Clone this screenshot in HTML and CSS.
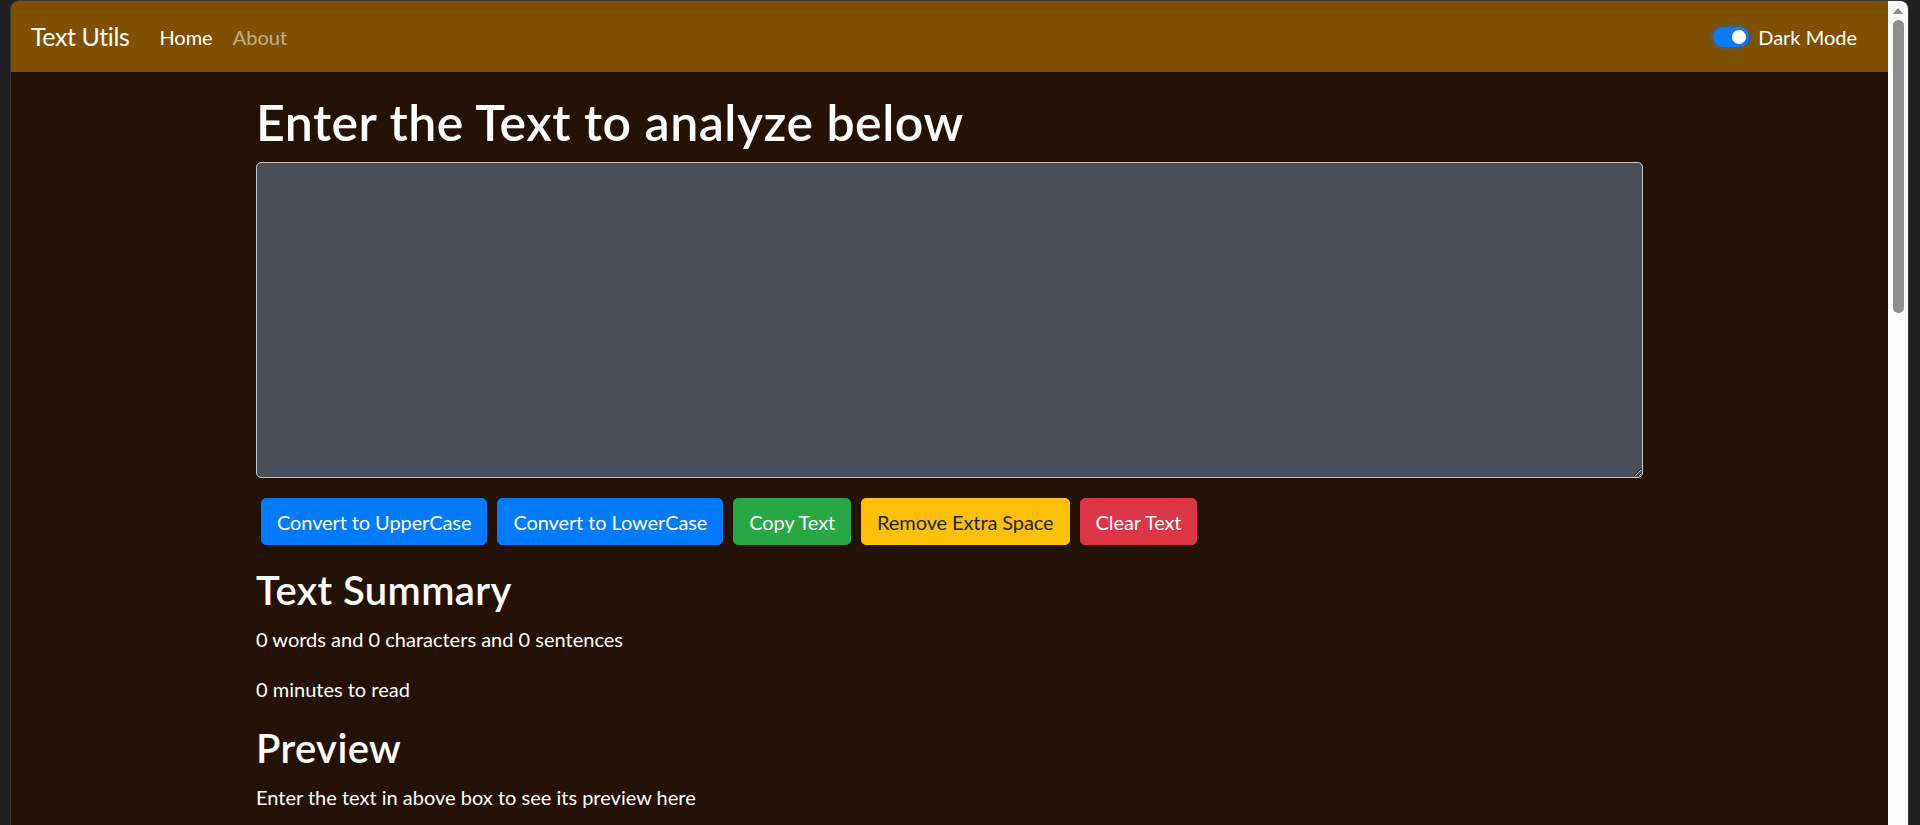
FILE: index.html
```html
<!DOCTYPE html>
<html lang="en">
<head>
<meta charset="utf-8">
<title>Text Utils</title>
<link rel="stylesheet" href="styles.css">
</head>
<body>
<div class="window">
  <div class="page">
    <nav class="navbar">
      <a class="brand" href="#">Text Utils</a>
      <ul class="nav">
        <li><a class="nav-link active" href="#">Home</a></li>
        <li><a class="nav-link" href="#">About</a></li>
      </ul>
      <label class="switch-wrap">
        <span class="switch"><span class="knob"></span></span>
        <span class="switch-label">Dark Mode</span>
      </label>
    </nav>
    <main class="container">
      <h1 class="title">Enter the Text to analyze below</h1>
      <div class="field">
        <textarea class="textarea" rows="8"></textarea>
      </div>
      <div class="btn-row">
        <button class="btn btn-primary">Convert to UpperCase</button>
        <button class="btn btn-primary">Convert to LowerCase</button>
        <button class="btn btn-success">Copy Text</button>
        <button class="btn btn-warning">Remove Extra Space</button>
        <button class="btn btn-danger">Clear Text</button>
      </div>
      <section class="summary">
        <h2 class="subtitle">Text Summary</h2>
        <p class="para">0 words and 0 characters and 0 sentences</p>
        <p class="para">0 minutes to read</p>
        <h2 class="subtitle">Preview</h2>
        <p class="para">Enter the text in above box to see its preview here</p>
      </section>
    </main>
  </div>
  <div class="scrollbar">
    <div class="arrow"></div>
    <div class="thumb"></div>
  </div>
</div>
</body>
</html>
```
FILE: styles.css
```css
* { box-sizing: border-box; }
html, body { margin: 0; padding: 0; }
body {
  background: #202020;
  height: 825px;
  overflow: hidden;
  font-family: "Lato", "Open Sans", sans-serif;
}
.window {
  margin-left: 10px;
  width: 1899px;
  height: 826px;
  border: 1px solid #3a3a3a;
  border-bottom: none;
  border-radius: 9px 9px 0 0;
  overflow: hidden;
  display: flex;
}
.page {
  flex: 1;
  background: #241206;
  color: #fff;
}
.navbar {
  height: 71px;
  background: #7f5000;
  display: flex;
  align-items: center;
  padding: 0 31px 0 20px;
}
.brand {
  font-size: 25px;
  letter-spacing: -0.4px;
  color: #fff;
  text-decoration: none;
  margin-right: 20px;
  line-height: 1;
}
.nav {
  list-style: none;
  display: flex;
  margin: 0;
  padding: 0;
}
.nav-link {
  display: block;
  padding: 10px 10px;
  font-size: 20px;
  color: rgba(255, 255, 255, 0.55);
  text-decoration: none;
}
.nav-link.active { color: #fff; }
.switch-wrap {
  margin-left: auto;
  display: flex;
  align-items: center;
  gap: 9px;
}
.switch {
  width: 36px;
  height: 20px;
  border-radius: 10px;
  background: #0a7bff;
  box-shadow: 0 0 0 3px #62573f;
  display: flex;
  align-items: center;
  justify-content: flex-end;
  padding: 0 3px;
}
.knob {
  width: 14px;
  height: 14px;
  border-radius: 50%;
  background: #fff;
}
.switch-label {
  font-size: 20px;
  color: #fff;
}
.container {
  width: 1425px;
  margin: 0 auto;
  padding: 0 19px;
}
.title {
  font-size: 50px;
  font-weight: 600;
  line-height: 60px;
  letter-spacing: 0.5px;
  margin: 20px 0 10px;
}
.field { margin-bottom: 20px; }
.textarea {
  display: block;
  width: 100%;
  height: 316px;
  background: #495059;
  border: 1px solid #c4c8cc;
  border-radius: 5px;
  color: #fff;
  font-size: 20px;
}
.btn-row {
  display: flex;
  margin-top: 1px;
}
.btn {
  margin: 0 5px;
  font-family: inherit;
  font-size: 20px;
  line-height: 30px;
  letter-spacing: -0.1px;
  padding: 7.5px 15px;
  border: 1px solid transparent;
  border-radius: 5px;
  color: #fff;
}
.btn-primary { background: #007bff; border-color: #007bff; }
.btn-success { background: #28a745; border-color: #28a745; }
.btn-warning { background: #ffc107; border-color: #ffc107; color: #212529; }
.btn-danger { background: #dc3545; border-color: #dc3545; }
.summary { margin-top: 21px; }
.subtitle {
  font-size: 40px;
  font-weight: 600;
  line-height: 48px;
  letter-spacing: 0.4px;
  margin: 0 0 10px;
}
.para {
  font-size: 20px;
  line-height: 30px;
  margin: 0 0 20px;
}
.scrollbar {
  width: 20px;
  background: #fafafa;
  position: relative;
}
.arrow {
  position: absolute;
  top: 7px;
  left: 5px;
  width: 0;
  height: 0;
  border-left: 5px solid transparent;
  border-right: 5px solid transparent;
  border-bottom: 6px solid #8c8c8c;
}
.thumb {
  position: absolute;
  top: 19px;
  left: 5px;
  width: 11px;
  height: 293px;
  border-radius: 6px;
  background: #8e8e8e;
}
```
